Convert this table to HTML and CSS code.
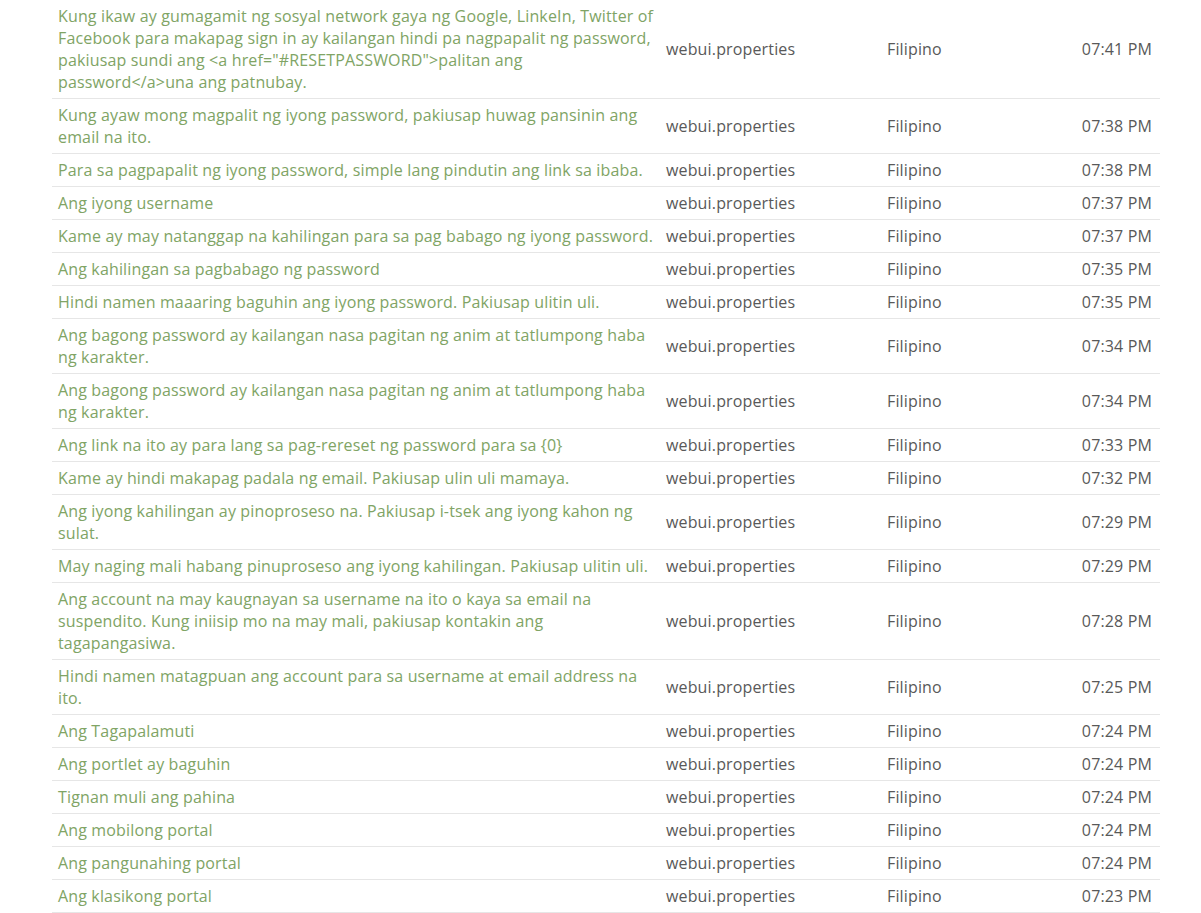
FILE: index.html
```html
<!DOCTYPE html>
<html>
<head>
<meta charset="utf-8">
<link rel="stylesheet" href="styles.css">
</head>
<body>
<div class="wrap">
<table class="entries">
<colgroup><col class="c-text"><col class="c-file"><col class="c-lang"><col class="c-time"></colgroup>
<tbody>
<tr><td class="key">Kung ikaw ay gumagamit ng sosyal network gaya ng Google, LinkeIn, Twitter of Facebook para makapag sign in ay kailangan hindi pa nagpapalit ng password, pakiusap sundi ang &lt;a href="#RESETPASSWORD"&gt;palitan ang password&lt;/a&gt;una ang patnubay.</td><td>webui.properties</td><td>Filipino</td><td class="time">07:41 PM</td></tr>
<tr><td class="key">Kung ayaw mong magpalit ng iyong password, pakiusap huwag pansinin ang email na ito.</td><td>webui.properties</td><td>Filipino</td><td class="time">07:38 PM</td></tr>
<tr><td class="key">Para sa pagpapalit ng iyong password, simple lang pindutin ang link sa ibaba.</td><td>webui.properties</td><td>Filipino</td><td class="time">07:38 PM</td></tr>
<tr><td class="key">Ang iyong username</td><td>webui.properties</td><td>Filipino</td><td class="time">07:37 PM</td></tr>
<tr><td class="key">Kame ay may natanggap na kahilingan para sa pag babago ng iyong password.</td><td>webui.properties</td><td>Filipino</td><td class="time">07:37 PM</td></tr>
<tr><td class="key">Ang kahilingan sa pagbabago ng password</td><td>webui.properties</td><td>Filipino</td><td class="time">07:35 PM</td></tr>
<tr><td class="key">Hindi namen maaaring baguhin ang iyong password. Pakiusap ulitin uli.</td><td>webui.properties</td><td>Filipino</td><td class="time">07:35 PM</td></tr>
<tr><td class="key">Ang bagong password ay kailangan nasa pagitan ng anim at tatlumpong haba ng karakter.</td><td>webui.properties</td><td>Filipino</td><td class="time">07:34 PM</td></tr>
<tr><td class="key">Ang bagong password ay kailangan nasa pagitan ng anim at tatlumpong haba ng karakter.</td><td>webui.properties</td><td>Filipino</td><td class="time">07:34 PM</td></tr>
<tr><td class="key">Ang link na ito ay para lang sa pag-rereset ng password para sa {0}</td><td>webui.properties</td><td>Filipino</td><td class="time">07:33 PM</td></tr>
<tr><td class="key">Kame ay hindi makapag padala ng email. Pakiusap ulin uli mamaya.</td><td>webui.properties</td><td>Filipino</td><td class="time">07:32 PM</td></tr>
<tr><td class="key">Ang iyong kahilingan ay pinoproseso na. Pakiusap i-tsek ang iyong kahon ng sulat.</td><td>webui.properties</td><td>Filipino</td><td class="time">07:29 PM</td></tr>
<tr><td class="key">May naging mali habang pinuproseso ang iyong kahilingan. Pakiusap ulitin uli.</td><td>webui.properties</td><td>Filipino</td><td class="time">07:29 PM</td></tr>
<tr><td class="key">Ang account na may kaugnayan sa username na ito o kaya sa email na suspendito. Kung iniisip mo na may mali, pakiusap kontakin ang tagapangasiwa.</td><td>webui.properties</td><td>Filipino</td><td class="time">07:28 PM</td></tr>
<tr><td class="key">Hindi namen matagpuan ang account para sa username at email address na ito.</td><td>webui.properties</td><td>Filipino</td><td class="time">07:25 PM</td></tr>
<tr><td class="key">Ang Tagapalamuti</td><td>webui.properties</td><td>Filipino</td><td class="time">07:24 PM</td></tr>
<tr><td class="key">Ang portlet ay baguhin</td><td>webui.properties</td><td>Filipino</td><td class="time">07:24 PM</td></tr>
<tr><td class="key">Tignan muli ang pahina</td><td>webui.properties</td><td>Filipino</td><td class="time">07:24 PM</td></tr>
<tr><td class="key">Ang mobilong portal</td><td>webui.properties</td><td>Filipino</td><td class="time">07:24 PM</td></tr>
<tr><td class="key">Ang pangunahing portal</td><td>webui.properties</td><td>Filipino</td><td class="time">07:24 PM</td></tr>
<tr><td class="key">Ang klasikong portal</td><td>webui.properties</td><td>Filipino</td><td class="time">07:23 PM</td></tr>
</tbody>
</table>
</div>
</body>
</html>
```
FILE: styles.css
```css
html, body {
  margin: 0;
  padding: 0;
  background: #ffffff;
}
body {
  font-family: "Open Sans", "Noto Sans", sans-serif;
  font-size: 16px;
  line-height: 22px;
  color: #595959;
  letter-spacing: 0.15px;
}
.wrap {
  padding: 0 41px 0 52px;
}
.entries {
  width: 1108px;
  border-collapse: collapse;
  table-layout: fixed;
}
.c-text { width: 608px; }
.c-file { width: 221px; }
.c-lang { width: 160px; }
.c-time { width: 119px; }
.entries td {
  padding: 5px 6px 5px 6px;
  border-bottom: 1px solid #e6e6e6;
  vertical-align: middle;
}
.entries td.key {
  color: #80a465;
  padding-right: 3px;
}
.entries td.time {
  text-align: right;
  padding-right: 8px;
}
```
